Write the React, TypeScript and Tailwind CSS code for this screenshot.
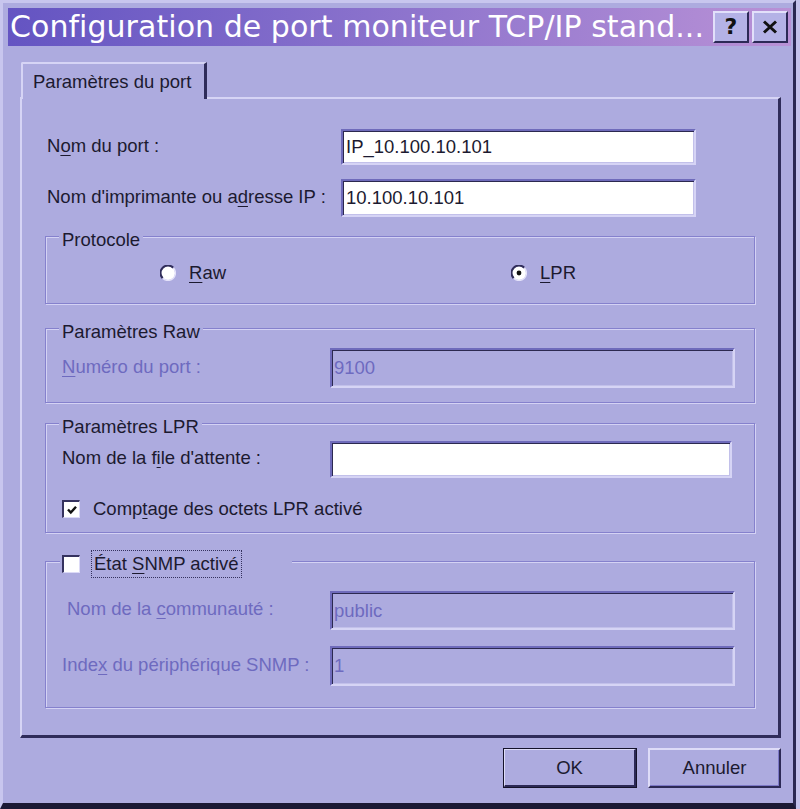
import React from "react";

const U = ({ children }: { children: React.ReactNode }) => (
  <span className="underline underline-offset-[3px] decoration-[1px]">{children}</span>
);

function Radio({ checked }: { checked?: boolean }) {
  return (
    <svg width="16" height="16" viewBox="0 0 16 16" className="shrink-0">
      <circle cx="8" cy="8" r="7" fill="#ffffff" />
      <path d="M2.7 13.3 A7.3 7.3 0 0 1 13.3 2.7" stroke="#302d5a" strokeWidth="2" fill="none" />
      <path d="M13.3 2.7 A7.3 7.3 0 0 1 2.7 13.3" stroke="#e4e2fa" strokeWidth="1.3" fill="none" />
      {checked && <circle cx="8" cy="8" r="2.4" fill="#111111" />}
    </svg>
  );
}

function Check({ checked }: { checked?: boolean }) {
  return (
    <div className="w-[18px] h-[18px] shrink-0 bg-white border-t-2 border-l-2 border-t-[#35325f] border-l-[#35325f] border-b border-r border-b-[#dcdaf7] border-r-[#dcdaf7] flex items-center justify-center">
      {checked && (
        <svg width="12" height="12" viewBox="0 0 12 12">
          <path d="M2 5.5 L4.8 8.5 L10 2.8" stroke="#111111" strokeWidth="2.4" fill="none" />
        </svg>
      )}
    </div>
  );
}

function Field({
  value,
  disabled,
  className,
}: {
  value?: string;
  disabled?: boolean;
  className: string;
}) {
  return (
    <div
      className={
        "border-2 border-t-[#6f6bbb] border-l-[#6f6bbb] border-b-[#d6d4f5] border-r-[#d6d4f5] shadow-[inset_1px_1px_0_#2c2950,inset_-1px_-1px_0_#c2c0ea] flex items-center text-[18.5px] " +
        (disabled ? "bg-[#adabdf] text-[#6e6abf] pl-[2px] " : "bg-white text-[#1c1a30] pl-[3px] ") +
        className
      }
    >
      {value}
    </div>
  );
}

function Group({
  label,
  className,
  children,
}: {
  label?: React.ReactNode;
  className: string;
  children?: React.ReactNode;
}) {
  return (
    <div
      className={
        "relative w-[710px] border border-[#8581cd] shadow-[inset_1px_1px_0_#d4d2f4,1px_1px_0_#d4d2f4] " +
        className
      }
    >
      {label}
      {children}
    </div>
  );
}

const Legend = ({ children }: { children: React.ReactNode }) => (
  <div className="absolute left-[13px] -top-[8px] px-[3px] bg-[#adabdf] leading-[22px] text-[#1c1a30]">
    {children}
  </div>
);

export default function App() {
  return (
    <div
      className="w-[800px] h-[809px] bg-[#c4c2ec] overflow-hidden text-[18.5px] text-[#1c1a30]"
      style={{ fontFamily: '"Liberation Sans", Arial, sans-serif' }}
    >
      <div className="w-[796px] h-[809px] bg-[#adabdf] border-l-[3px] border-t-[3px] border-l-[#c8c6ee] border-t-[#c8c6ee] border-r-[3px] border-r-[#2a2852] border-b-[6px] border-b-[#1a1834] pl-[5px] pt-[5px] pr-[2px] flex flex-col">
        {/* Title bar */}
        <div className="h-[38px] shrink-0 bg-gradient-to-r from-[#6454c2] to-[#b991d6] flex items-center pl-[2px] pr-[3px]">
          <div
            className="flex-1 text-white text-[30px] leading-[36px] whitespace-nowrap tracking-[0.05px]"
            style={{ fontFamily: '"DejaVu Sans", Verdana, sans-serif' }}
          >
            Configuration de port moniteur TCP/IP stand...
          </div>
          <div className="flex gap-[3px]">
            <div
              className="w-[36px] h-[32px] bg-[#b4b2e6] border-t-2 border-l-2 border-t-[#e2e0fa] border-l-[#e2e0fa] border-b-2 border-r-2 border-b-[#2c2956] border-r-[#2c2956] flex items-center justify-center text-[22px] font-bold text-[#111] leading-none"
              style={{ fontFamily: '"DejaVu Sans", sans-serif' }}
            >
              ?
            </div>
            <div className="w-[36px] h-[32px] bg-[#b4b2e6] border-t-2 border-l-2 border-t-[#e2e0fa] border-l-[#e2e0fa] border-b-2 border-r-2 border-b-[#2c2956] border-r-[#2c2956] flex items-center justify-center">
              <svg width="16" height="14" viewBox="0 0 16 14">
                <path d="M2 1.5 L14 12.5 M14 1.5 L2 12.5" stroke="#111111" strokeWidth="3" />
              </svg>
            </div>
          </div>
        </div>

        {/* Tab */}
        <div className="mt-[16px] ml-[13px] relative z-10 -mb-[2px] w-[186px] h-[37px] bg-[#adabdf] border-l-2 border-t-2 border-l-[#d6d4f5] border-t-[#d6d4f5] border-r-[3px] border-r-[#2f2c5a] rounded-tl-[2px] pl-[10px] pt-[7px] leading-[22px] whitespace-nowrap">
          Paramètres du port
        </div>

        {/* Panel */}
        <div className="ml-[12px] w-[761px] h-[641px] shrink-0 border-l-2 border-t-2 border-l-[#d6d4f5] border-t-[#d6d4f5] border-r-[3px] border-b-[3px] border-r-[#2f2c5a] border-b-[#2f2c5a] pl-[23px] flex flex-col">
          <div className="mt-[30px] h-[36px] flex items-center">
            <div className="w-[296px] pl-[2px] pb-[3px]">
              N<U>o</U>m du port :
            </div>
            <Field value="IP_10.100.10.101" className="w-[355px] h-[36px]" />
          </div>
          <div className="mt-[14px] h-[38px] flex items-center">
            <div className="w-[296px] pl-[2px] pb-[3px] whitespace-nowrap">
              Nom d&apos;imprimante ou a<U>d</U>resse IP :
            </div>
            <Field value="10.100.10.101" className="w-[355px] h-[38px]" />
          </div>

          <Group className="mt-[19px] h-[68px]" label={<Legend>Protocole</Legend>}>
            <div className="pt-[28px] flex items-center h-[44px]">
              <div className="ml-[114px] flex items-center gap-[13px]">
                <Radio />
                <span>
                  <U>R</U>aw
                </span>
              </div>
              <div className="ml-[285px] flex items-center gap-[13px]">
                <Radio checked />
                <span>
                  <U>L</U>PR
                </span>
              </div>
            </div>
          </Group>

          <Group className="mt-[24px] h-[75px]" label={<Legend>Paramètres Raw</Legend>}>
            <div className="pt-[19px] pl-[16px] flex items-center">
              <div className="w-[268px] text-[#6e6abf] pb-[3px]">
                <U>N</U>uméro du port :
              </div>
              <Field value="9100" disabled className="w-[405px] h-[40px]" />
            </div>
          </Group>

          <Group className="mt-[20px] h-[110px]" label={<Legend>Paramètres LPR</Legend>}>
            <div className="pt-[17px] pl-[16px] flex items-center">
              <div className="w-[268px] pb-[3px]">
                Nom de la f<U>i</U>le d&apos;attente :
              </div>
              <Field className="w-[402px] h-[37px]" />
            </div>
            <div className="mt-[21px] pl-[16px] flex items-center gap-[13px]">
              <Check checked />
              <span className="leading-[20px]">
                Comp<U>t</U>age des octets LPR activé
              </span>
            </div>
          </Group>

          <Group
            className="mt-[28px] h-[147px]"
            label={
              <div className="absolute left-[14px] -top-[12px] w-[232px] h-[28px] bg-[#adabdf] flex items-center pl-[2px]">
                <Check />
                <div className="ml-[11px] h-[28px] border border-dotted border-[#35325e] flex items-center px-[2px] leading-[20px]">
                  <span>
                    État <U>S</U>NMP activé
                  </span>
                </div>
              </div>
            }
          >
            <div className="pt-[29px] pl-[16px] flex items-center">
              <div className="w-[268px] pl-[5px] text-[#6e6abf] pb-[3px]">
                Nom de la <U>c</U>ommunauté :
              </div>
              <Field value="public" disabled className="w-[405px] h-[39px]" />
            </div>
            <div className="mt-[16px] pl-[16px] flex items-center">
              <div className="w-[268px] text-[#6e6abf] whitespace-nowrap pb-[3px]">
                Inde<U>x</U> du périphérique SNMP :
              </div>
              <Field value="1" disabled className="w-[405px] h-[40px]" />
            </div>
          </Group>
        </div>

        {/* Buttons */}
        <div className="ml-[12px] w-[761px] mt-[10px] flex justify-end gap-[11px]">
          <div className="w-[134px] h-[40px] border border-[#15132a] flex">
            <div className="flex-1 bg-[#adabdf] border-t border-l border-t-[#dedcf8] border-l-[#dedcf8] border-b-2 border-r-2 border-b-[#2c2956] border-r-[#2c2956] flex items-center justify-center">
              OK
            </div>
          </div>
          <div className="w-[133px] h-[40px] bg-[#adabdf] border-t-2 border-l-2 border-t-[#dedcf8] border-l-[#dedcf8] border-b-2 border-r-2 border-b-[#2c2956] border-r-[#2c2956] shadow-[inset_-1px_-1px_0_#7c78c6] flex items-center justify-center">
            Annuler
          </div>
        </div>
      </div>
    </div>
  );
}
